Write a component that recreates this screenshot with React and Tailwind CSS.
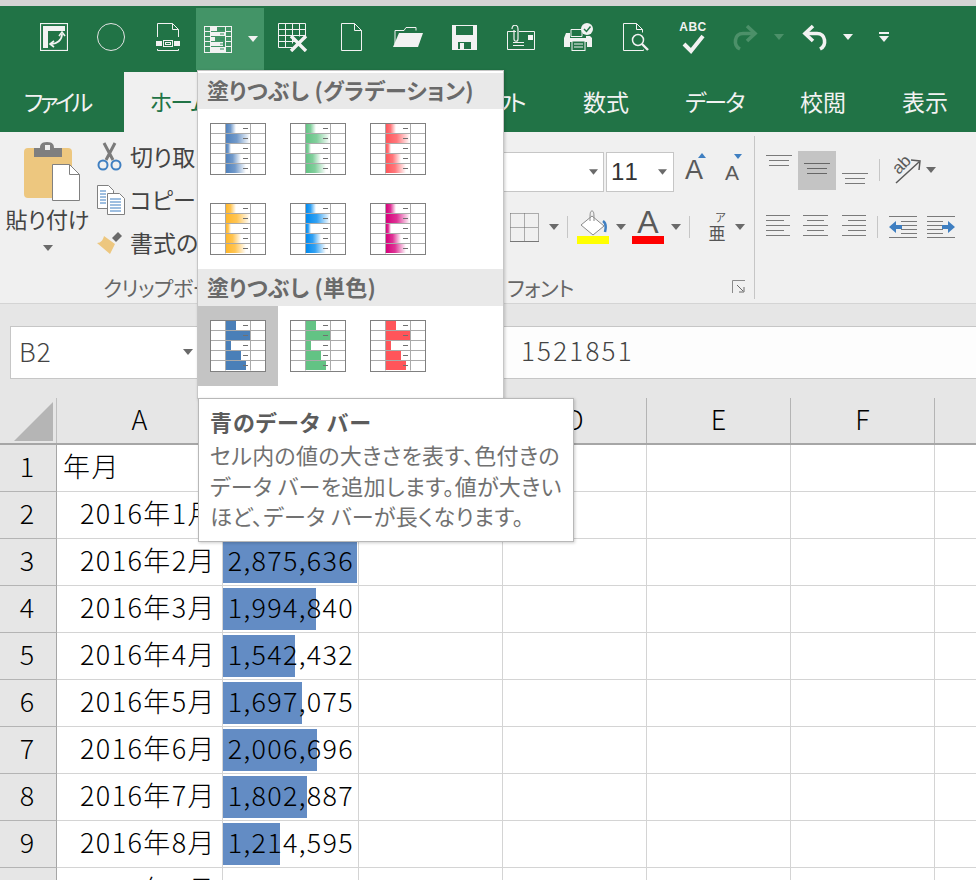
import React from 'react'

const rows = [
  { label: '2016年1月', value: 1521851 },
  { label: '2016年2月', value: 2875636 },
  { label: '2016年3月', value: 1994840 },
  { label: '2016年4月', value: 1542432 },
  { label: '2016年5月', value: 1697075 },
  { label: '2016年6月', value: 2006696 },
  { label: '2016年7月', value: 1802887 },
  { label: '2016年8月', value: 1214595 },
]

const Caret = ({ className = 'fill-[#6a6a6a]', w = 10, h = 6 }) => (
  <svg width={w} height={h} viewBox="0 0 10 6" className={`shrink-0 ${className}`}>
    <path d="M0 0h10L5 6z" />
  </svg>
)

// quick access toolbar icons, all light strokes on green
const Ico = ({ w = 28, h = 28, children }) => (
  <svg width={w} height={h} viewBox={`0 0 ${w} ${h}`} fill="none" stroke="#f2f2f2" strokeWidth="1">
    {children}
  </svg>
)

const PivotIcon = () => (
  <Ico>
    <rect x="0.5" y="0.5" width="27" height="27" strokeWidth="1.2" />
    <path d="M8 3h17v5H8zM3 3h5v22H3z" fill="#f2f2f2" stroke="none" />
    <path d="M11 21c6 0 11-4 11-10" strokeWidth="1.8" />
    <path d="M19 13l3-4 3 4M14 18l-4 3 4 3" strokeWidth="1.6" />
  </Ico>
)

const FormIcon = () => (
  <Ico w={24} h={28}>
    <path d="M1.500 14V.5h15l6 6V14M1.500 26v1.500h21V26M16.500.5v6h6" />
    <path d="M0 18h6v5H0zM18 18h6v5h-6z" fill="#f2f2f2" stroke="none" />
    <rect x="7.500" y="17.500" width="9" height="6" />
    <rect x="9.500" y="19.500" width="5" height="2" />
  </Ico>
)

const DataBarIcon = () => (
  <Ico h={27}>
    <rect x="0.5" y="0.5" width="27" height="26" />
    <path d="M6.500 0v27M21.500 0v27M0 5.500h6M0 10.500h6M0 15.500h6M0 20.500h6M21 5.500h7M21 10.500h7M21 15.500h7M21 20.500h7" />
    <path d="M7 1h6v4H7zM7 6h14v4H7zM7 11h4v4H7zM7 16h12v4H7zM7 21h14v5H7z" fill="#f2f2f2" stroke="none" />
    <path d="M16 3h4M16 8h4M16 13h4M16 18h4M16 23h4" stroke="#2f8a5a" />
  </Ico>
)

const GridXIcon = () => (
  <Ico w={31} h={29}>
    <path d="M.5.5h27v15M.5.5v24h14M.5 6.500h27M.5 12.500h27M.5 18.500h17M7.500.5v24M14.500.5v20M21.500.5v13" />
    <path d="M13 13l15 15M28 13L13 28" strokeWidth="3.400" />
  </Ico>
)

const NewDocIcon = () => (
  <Ico w={21} h={28}>
    <path d="M.5.5h13l7 7v20H.5zM13.500.5v7h7" />
  </Ico>
)

const FolderIcon = () => (
  <svg width="30" height="22" viewBox="0 0 30 22">
    <path d="M2 18V4.500h9l2-3h10v3" fill="none" stroke="#f2f2f2" />
    <path d="M0 21L6 7h24l-5 14z" fill="#f2f2f2" />
  </svg>
)

const SaveIcon = () => (
  <svg width="25" height="25" viewBox="0 0 25 25">
    <path d="M0 0h25v25H0z" fill="#f2f2f2" />
    <path d="M4 1h17v9H4zM6 17h13v7H6z" fill="#217346" />
    <path d="M8 18h4v6H8z" fill="#f2f2f2" />
  </svg>
)

const MailIcon = () => (
  <Ico h={25}>
    <path d="M9 6.500H.5v18h27v-18H12" />
    <path d="M6 20.500h11M6 17.500h11" />
    <path d="M21 10h5v5h-5z" fill="#f2f2f2" stroke="none" />
    <path d="M5 4c0-5 6-5 6 0v10c0 3-4 3-4 0V5" strokeWidth="1.200" />
  </Ico>
)

const PrinterIcon = () => (
  <svg width="29" height="28" viewBox="0 0 29 28">
    <path d="M7 6.500h11v7H7z" fill="none" stroke="#f2f2f2" />
    <path d="M2 10h4v5h16v-2h4l2 2v9h-5v-5H6v5H0v-9z" fill="#f2f2f2" />
    <rect x="8" y="18" width="13" height="9.500" fill="#217346" stroke="#f2f2f2" />
    <path d="M10 21h9M10 24h9" stroke="#f2f2f2" />
    <circle cx="23" cy="6" r="6" fill="#f2f2f2" />
    <path d="M20 6l2.500 2.500L26.500 3.500" fill="none" stroke="#217346" strokeWidth="1.500" />
  </svg>
)

const PreviewIcon = () => (
  <Ico h={28}>
    <path d="M.5.5h13l6 6v3M13.500.5v6h6M.5.5v27h20v-1" />
    <circle cx="15" cy="17" r="5.500" strokeWidth="1.500" />
    <path d="M19 21l6 6" strokeWidth="2.400" />
  </Ico>
)

const SpellIcon = () => (
  <div className="flex flex-col items-center">
    <span className="text-[12px] leading-[12px] font-bold text-[#f2f2f2] font-['Liberation_Sans',sans-serif] tracking-[0.5px]">ABC</span>
    <svg width="23" height="20" viewBox="0 0 23 20" className="mt-[1px]">
      <path d="M2 10l7 7L21 2" fill="none" stroke="#f2f2f2" strokeWidth="4" />
    </svg>
  </div>
)

const UndoIcon = ({ stroke = '#f2f2f2', flip = false }) => (
  <svg width="27" height="27" viewBox="0 0 27 27" className={flip ? '-scale-x-100' : ''} fill="none" stroke={stroke} strokeWidth="3.600">
    <path d="M11 2L3 9.500l8 7.500" />
    <path d="M4 9.500h11c9 0 10 12 3 15.500" />
  </svg>
)

const QatItem = ({ w = 57, children }) => (
  <div className="flex justify-center items-center shrink-0 h-[58px]" style={{ width: w }}>
    {children}
  </div>
)

const QuickAccess = () => (
  <div className="flex items-start pl-[25px] pt-[2px] h-[66px] bg-[#217346]">
    <QatItem><PivotIcon /></QatItem>
    <QatItem>
      <div className="w-[28px] h-[28px] rounded-full border border-[#e4e4e4]" />
    </QatItem>
    <QatItem><FormIcon /></QatItem>
    <div className="flex items-center w-[68px] h-[62px] bg-[#439467] pl-[8px] shrink-0">
      <DataBarIcon />
      <span className="ml-[16px]"><Caret className="fill-[#f2f2f2]" /></span>
    </div>
    <QatItem w={59}><GridXIcon /></QatItem>
    <QatItem w={56}><NewDocIcon /></QatItem>
    <QatItem w={58}><FolderIcon /></QatItem>
    <QatItem w={55}><SaveIcon /></QatItem>
    <QatItem w={58}><MailIcon /></QatItem>
    <QatItem w={57}><PrinterIcon /></QatItem>
    <QatItem w={59}><PreviewIcon /></QatItem>
    <QatItem w={54}><SpellIcon /></QatItem>
    <QatItem w={49}><UndoIcon stroke="#4c9069" flip /></QatItem>
    <div className="w-[20px] flex justify-center h-[58px] items-center"><Caret className="fill-[#4c9069]" /></div>
    <QatItem w={52}><UndoIcon /></QatItem>
    <div className="w-[14px] flex justify-center h-[58px] items-center"><Caret className="fill-[#f2f2f2]" /></div>
    <div className="ml-[23px] flex flex-col items-center gap-[2px] justify-center h-[58px] w-[12px]">
      <div className="w-[10px] h-[2px] bg-[#f2f2f2]" />
      <Caret className="fill-[#f2f2f2]" />
    </div>
  </div>
)

const Tabs = () => (
  <div className="flex h-[60px] bg-[#217346] text-[23px] text-[#f2f2f2] font-['Noto_Sans_CJK_JP',sans-serif] [font-feature-settings:'palt'] whitespace-nowrap">
    <div className="pl-[24px] w-[124px] shrink-0 flex items-center pb-[2px] tracking-[-3.5px]">ファイル</div>
    <div className="pl-[26px] w-[123px] shrink-0 bg-[#f0f0f0] text-[#217346] flex items-center pb-[2px] tracking-[-2px]">ホーム</div>
    <div className="pl-[28px] w-[102px] shrink-0 flex items-center pb-[2px]">挿入</div>
    <div className="pl-[28px] w-[206px] shrink-0 flex items-center pb-[2px] tracking-[-3px]">ページ レイアウト</div>
    <div className="px-[28px] shrink-0 flex items-center pb-[2px]">数式</div>
    <div className="pl-[28px] w-[115px] shrink-0 flex items-center pb-[2px] tracking-[-2px]">データ</div>
    <div className="px-[28px] shrink-0 flex items-center pb-[2px]">校閲</div>
    <div className="px-[28px] shrink-0 flex items-center pb-[2px]">表示</div>
  </div>
)

const ScissorsIcon = () => (
  <svg width="25" height="29" viewBox="0 0 25 29" fill="none">
    <path d="M7 1l9 17M18 1L9 18" stroke="#7a7a7a" strokeWidth="3" />
    <circle cx="6" cy="23" r="4.500" stroke="#3f7fc1" strokeWidth="2" />
    <circle cx="19" cy="23" r="4.500" stroke="#3f7fc1" strokeWidth="2" />
  </svg>
)

const CopyIcon = () => (
  <svg width="28" height="30" viewBox="0 0 28 30" fill="#fff" stroke="#808080">
    <path d="M.5.5h11l5 5v18H.5z" />
    <path d="M10.500 8.500h12l5 5v16h-17z" />
    <path d="M3 6h6M3 9h6M3 12h6M3 15h6M3 18h6M13 14h11M13 17h11M13 20h11M13 23h11M13 26h11" stroke="#3f7fc1" />
  </svg>
)

const BrushIcon = () => (
  <svg width="26" height="24" viewBox="0 0 26 24">
    <path d="M7 5l11 8-5 10L0 12c4 0 6-3 7-7z" fill="#edc77f" />
    <path d="M15 7l6-6 4 4-6 6z" fill="#6a6a6a" />
  </svg>
)

const PasteIcon = () => (
  <svg width="57" height="59" viewBox="0 0 57 59">
    <rect x="0" y="6" width="48" height="50" rx="4" fill="#edc77f" />
    <path d="M10 6h6c0-3 1-6 7-6s7 3 7 6h8v9H10z" fill="#7f7f7f" />
    <rect x="21" y="3" width="5" height="5" fill="#f0f0f0" />
    <path d="M28.500 22.500h17l10 10v26h-27z" fill="#fff" stroke="#808080" />
    <path d="M45.500 22.500v10h10" fill="none" stroke="#808080" />
  </svg>
)

const ClipItem = ({ icon, label, h }) => (
  <div className="flex items-center whitespace-nowrap" style={{ height: h }}>
    <div className="w-[33px] shrink-0">{icon}</div>
    <span>{label}</span>
  </div>
)

const GroupLabel = ({ className = '', children }) => (
  <div className={`h-[34px] pt-[3px] flex items-center text-[21px] text-[#666] whitespace-nowrap [font-feature-settings:'palt'] tracking-[-0.5px] ${className}`}>
    {children}
  </div>
)

const ClipboardGroup = () => (
  <div className="w-[268px] h-full shrink-0 flex flex-col overflow-hidden">
    <div className="flex h-[138px]">
      <div className="w-[97px] shrink-0 flex flex-col items-center pt-[10px] pr-[2px]">
        <div className="pl-[9px]"><PasteIcon /></div>
        <div className="text-[22px] leading-[30px] mt-[2px] text-[#444] whitespace-nowrap [font-feature-settings:'palt']">貼り付け</div>
        <div className="mt-[12px]"><Caret /></div>
      </div>
      <div className="pt-[3px] text-[23px] text-[#444] [font-feature-settings:'palt']">
        <ClipItem h={43} icon={<ScissorsIcon />} label="切り取り" />
        <ClipItem h={43} icon={<CopyIcon />} label="コピー" />
        <ClipItem h={43} icon={<BrushIcon />} label="書式のコピー/貼り付け" />
      </div>
    </div>
    <GroupLabel className="pl-[103px]">クリップボード</GroupLabel>
  </div>
)

const Sep = ({ h = 22, mx = 0 }) => (
  <div className="w-px bg-[#c6c6c6] shrink-0" style={{ height: h, marginLeft: mx, marginRight: mx }} />
)

// horizontal line stacks for the alignment buttons
const Lines = ({ items, w = 26, stroke = '#7a7a7a' }) => (
  <svg width={w} height={items.length * 5} viewBox={`0 0 ${w} ${items.length * 5}`} stroke={stroke} className="shrink-0">
    {items.map(([x1, x2], i) => (
      <path key={i} d={`M${x1} ${i * 5 + 0.5}H${x2}`} />
    ))}
  </svg>
)

const BorderIcon = () => (
  <svg width="29" height="29" viewBox="0 0 29 29" fill="none" stroke="#666" strokeDasharray="1 1">
    <path d="M.5.500h28M.5.500v28M14.500.500v28M28.500.500v28M.5 14.500h28" />
    <path d="M0 28.500h29" strokeDasharray="none" stroke="#777" />
  </svg>
)

const BucketIcon = () => (
  <div className="flex flex-col items-center w-[32px]">
    <svg width="28" height="26" viewBox="0 0 28 26" fill="none">
      <path d="M13 6L25 16 14 25 2 15z" fill="#fff" stroke="#8a8a8a" />
      <path d="M13 1c-2 0-2 3-2 10M13 1c2 0 2 3 2 10" stroke="#8a8a8a" />
      <path d="M24 11c3 2 3 7 2 11" stroke="#3f7fc1" strokeWidth="2.500" />
    </svg>
    <div className="w-[32px] h-[8px] bg-[#ffff00]" />
  </div>
)

const FontColorIcon = () => (
  <div className="flex flex-col items-center w-[32px]">
    <span className="text-[32px] leading-[24px] h-[26px] text-[#5a5a5a] font-['Liberation_Sans',sans-serif]">A</span>
    <div className="w-[32px] h-[8px] bg-[#ff0000]" />
  </div>
)

const IndentIcon = ({ flip }) => (
  <svg width="28" height="22" viewBox="0 0 28 22" className={flip ? '-scale-x-100' : ''}>
    <path d="M0 .5h28M0 21.500h28M12 5.500h16M12 9.500h16M12 13.500h16M12 17.500h16" stroke="#7a7a7a" />
    <path d="M0 11l7-6v4h6v4H7v4z" fill="#3f7fc1" />
  </svg>
)

const FontGroup = () => (
  <div className="w-[486px] h-full shrink-0 flex flex-col">
    <div className="h-[138px] pt-[20px]">
      <div className="flex items-center h-[40px]">
        <div className="ml-[32px] w-[304px] h-[40px] bg-white border border-[#c6c6c6] flex items-center justify-end pr-[5px]">
          <Caret w={9} />
        </div>
        <div className="ml-[2px] w-[68px] h-[40px] bg-white border border-[#c6c6c6] flex items-center justify-between pl-[4px] pr-[6px]">
          <span className="text-[24px] text-[#333] font-['Liberation_Sans',sans-serif] tracking-[2px]">11</span>
          <Caret w={9} />
        </div>
        <div className="relative ml-[11px] -mt-[5px] text-[27px] leading-[30px] text-[#5a5a5a] font-['Liberation_Sans',sans-serif]">
          A
          <svg width="8" height="5" viewBox="0 0 8 5" className="absolute -top-[2px] -right-[3px] fill-[#3f7fc1]"><path d="M0 5h8L4 0z" /></svg>
        </div>
        <div className="relative ml-[22px] mt-[2px] text-[21px] leading-[24px] text-[#5a5a5a] font-['Liberation_Sans',sans-serif]">
          A
          <svg width="8" height="5" viewBox="0 0 8 5" className="absolute -top-[7px] -right-[3px] fill-[#3f7fc1]"><path d="M0 0h8L4 5z" /></svg>
        </div>
      </div>
      <div className="flex items-center h-[34px] mt-[18px] ml-[242px]">
        <BorderIcon />
        <span className="ml-[10px]"><Caret /></span>
        <Sep mx={8} />
        <span className="ml-[1px]"><BucketIcon /></span>
        <span className="ml-[7px]"><Caret /></span>
        <span className="ml-[6px]"><FontColorIcon /></span>
        <span className="ml-[7px]"><Caret /></span>
        <Sep mx={8} />
        <div className="ml-[10px] w-[18px] flex flex-col items-center text-[#555] leading-none font-['Noto_Sans_CJK_JP',sans-serif]">
          <span className="text-[11px] leading-[11px] self-end">ア</span>
          <span className="text-[17px] leading-[20px]">亜</span>
        </div>
        <span className="ml-[9px]"><Caret /></span>
      </div>
    </div>
    <div className="flex items-center justify-between pr-[9px]">
      <GroupLabel className="pl-[239px]">フォント</GroupLabel>
      <svg width="13" height="13" viewBox="0 0 13 13" fill="none" stroke="#8a8a8a">
        <path d="M.5 13V.5H13" />
        <path d="M5 5l6 6M12 7v5H7" stroke="#6a6a6a" />
      </svg>
    </div>
  </div>
)

const OrientIcon = () => (
  <div className="relative w-[30px] h-[30px] ml-[11px] text-[#5a5a5a]">
    <span className="absolute left-[1px] top-[1px] -rotate-45 text-[17px] leading-[17px] font-['Liberation_Sans',sans-serif]">ab</span>
    <svg width="30" height="30" viewBox="0 0 30 30" fill="none" stroke="#5a5a5a" className="absolute inset-0">
      <path d="M5 28L28 7M20 5l9 1-1 9" strokeWidth="1.500" />
    </svg>
  </div>
)

const AlignGroup = () => (
  <div className="flex-1 h-full flex flex-col pl-[11px]">
    <div className="flex items-center h-[40px] mt-[18px]">
      <div className="self-start mt-[5px]"><Lines items={[[0, 26], [3, 23], [3, 23]]} /></div>
      <div className="ml-[6px] w-[38px] h-[39px] bg-[#c4c4c4] flex items-center justify-center">
        <Lines items={[[0, 26], [3, 23], [3, 23]]} stroke="#666" />
      </div>
      <div className="ml-[6px] self-end mb-[2px]"><Lines items={[[0, 26], [3, 23], [3, 23]]} /></div>
      <span className="ml-[11px]"><Sep /></span>
      <OrientIcon />
      <span className="ml-[5px]"><Caret /></span>
    </div>
    <div className="flex items-center h-[24px] mt-[25px]">
      <Lines items={[[0, 24], [0, 18], [0, 24], [0, 18], [0, 24]]} w={24} />
      <span className="ml-[13px]"><Lines items={[[0, 25], [4, 21], [0, 25], [4, 21], [0, 25]]} w={25} /></span>
      <span className="ml-[14px]"><Lines items={[[0, 24], [6, 24], [0, 24], [6, 24], [0, 24]]} w={24} /></span>
      <span className="ml-[11px]"><Sep /></span>
      <span className="ml-[11px]"><IndentIcon /></span>
      <span className="ml-[10px]"><IndentIcon flip /></span>
    </div>
  </div>
)

const Ribbon = () => (
  <div className="relative flex h-[172px] bg-[#f0f0f0] border-b border-[#d4d4d4] font-['Noto_Sans_CJK_JP',sans-serif] overflow-hidden">
    <ClipboardGroup />
    <FontGroup />
    <div className="w-px bg-[#c6c6c6] my-[4px] shrink-0" />
    <AlignGroup />
  </div>
)

const FormulaBar = () => (
  <div className="flex items-center h-[94px] bg-[#e6e6e6] pl-[10px] pt-[2px]">
    <div className="w-[200px] h-[53px] bg-white border border-[#c6c6c6] flex items-center justify-between pl-[8px] pr-[16px]">
      <span className="text-[26px] text-[#444] font-light pb-[3px] tracking-[1px] font-['Noto_Sans_CJK_JP',sans-serif]">B2</span>
      <Caret w={10} />
    </div>
    <div className="ml-[90px] flex-1 h-[53px] bg-[#fdfdfd] border-y border-[#c6c6c6] flex items-center pl-[221px]">
      <span className="text-[26px] text-[#444] font-light pb-[5px] tracking-[2.200px] font-['Noto_Sans_CJK_JP',sans-serif]">1521851</span>
    </div>
  </div>
)

const colWidths = ['w-[166px]', 'w-[136px]', 'w-[144px]', 'w-[144px]', 'w-[144px]', 'w-[144px]']

const Sheet = () => (
  <div className="text-[27px] font-light text-black font-['Noto_Sans_CJK_JP',sans-serif]">
    <div className="flex h-[47px] bg-[#e6e6e6] border-b-2 border-[#a6a6a6]">
      <div className="w-[57px] shrink-0 border-r border-[#c0c0c0] pl-[14px] pt-[4px]">
        <svg width="39" height="39" viewBox="0 0 39 39"><path d="M39 0v39H0z" fill="#b5b5b5" /></svg>
      </div>
      {['A', 'B', 'C', 'D', 'E', 'F'].map((c, i) => (
        <div key={c} className={`${colWidths[i]} shrink-0 border-r border-[#b4b4b4] flex items-center justify-center pb-[2px]`}>{c}</div>
      ))}
    </div>
    {Array.from({ length: 10 }).map((_, i) => {
      const row = rows[i - 1]
      return (
        <div key={i} className="flex h-[47px]">
          <div className="w-[57px] shrink-0 bg-[#e6e6e6] border-r border-b border-r-[#a6a6a6] border-b-[#b4b4b4] flex items-center justify-center pr-[2px] pb-[3px]">{i + 1}</div>
          <div className="w-[166px] shrink-0 border-r border-b border-[#d4d4d4] flex items-center justify-end pr-[6px] pb-[3px] whitespace-nowrap tracking-[1.400px]">
            {i === 0 && <span className="w-full pl-[6px]">年月</span>}
            {row && row.label}
            {i === 9 && '2016年9月'}
          </div>
          <div className="relative w-[136px] shrink-0 border-r border-b border-[#d4d4d4] flex items-center justify-end pr-[4px] tracking-[1.300px]">
            {row && (
              <>
                <div className="absolute left-0 top-[2px] bottom-[2px] bg-[#638cc4]" style={{ width: (row.value / 2875636) * 134 }} />
                <span className="relative pb-[3px]">{row.value.toLocaleString('en-US')}</span>
              </>
            )}
          </div>
          {colWidths.slice(2).map((w, n) => (
            <div key={n} className={`${w} shrink-0 border-r border-b border-[#d4d4d4]`} />
          ))}
          <div className="flex-1 border-b border-[#d4d4d4]" />
        </div>
      )
    })}
  </div>
)

const Thumb = ({ color, id, solid }) => {
  const bars = [10, 24, 5, 15, 20]
  return (
    <svg width="56" height="52" viewBox="0 0 56 52">
      <defs>
        <linearGradient id={id}>
          <stop offset="0" stopColor={color} />
          <stop offset="0.45" stopColor={color} stopOpacity="0.8" />
          <stop offset="1" stopColor={color} stopOpacity="0" />
        </linearGradient>
      </defs>
      <rect x="0" y="0" width="56" height="52" fill="#fff" />
      <path d="M0 11h55M0 21h55M0 31h55M0 41h55M15.500 1v50M40.500 1v50" stroke="#aaaaaa" fill="none" transform="translate(0 -.5)" />
      {bars.map((b, i) => (
        <rect key={i} x="16" y={i * 10 + 1} width={b} height="9" fill={solid ? color : `url(#${id})`} />
      ))}
      <rect x="0.5" y="0.5" width="55" height="51" fill="none" stroke="#808080" />
      <path d="M33 5h5M33 15h5M33 25h5M33 35h5M33 45h5" stroke="#707070" transform="translate(0 .5)" />
    </svg>
  )
}

const Tile = ({ active, ...props }) => (
  <div className={`w-[80px] h-[80px] flex items-start pl-[12px] pt-[14px] ${active ? 'bg-[#c4c4c4]' : ''}`}>
    <Thumb {...props} />
  </div>
)

const MenuTitle = ({ className, children }) => (
  <div className={`${className} bg-[#e9e9e9] pl-[9px] pb-[3px] flex items-center text-[22px] font-bold text-[#6a6a6a] [font-feature-settings:'palt'] tracking-[0.2px] whitespace-nowrap`}>
    {children}
  </div>
)

const DataBarMenu = () => (
  <div className="absolute left-[197px] top-[70px] w-[307px] h-[329px] bg-white border border-[#c6c6c6] shadow-[1px_1px_3px_rgba(0,0,0,0.2)] pt-[2px] font-['Noto_Sans_CJK_JP',sans-serif]">
    <MenuTitle className="h-[36px]">塗りつぶし (グラデーション)</MenuTitle>
    <div className="grid grid-cols-[repeat(3,80px)]">
      <Tile id="g1" color="#4f81bd" />
      <Tile id="g2" color="#63c384" />
      <Tile id="g3" color="#ff555a" />
      <Tile id="g4" color="#ffb628" />
      <Tile id="g5" color="#008aef" />
      <Tile id="g6" color="#d6007b" />
    </div>
    <MenuTitle className="h-[37px]">塗りつぶし (単色)</MenuTitle>
    <div className="grid grid-cols-[repeat(3,80px)]">
      <Tile id="s1" color="#4a7fb8" solid active />
      <Tile id="s2" color="#63c384" solid />
      <Tile id="s3" color="#ff555a" solid />
    </div>
  </div>
)

const Tip = () => (
  <div className="absolute left-[198px] top-[398px] w-[376px] h-[144px] bg-white border border-[#b8b8b8] shadow-[1px_1px_3px_rgba(0,0,0,0.2)] pl-[11px] pt-[7px] font-['Noto_Sans_CJK_JP',sans-serif] [font-feature-settings:'palt'] whitespace-nowrap">
    <div className="text-[22px] leading-[30px] font-bold tracking-[1px] text-[#5c5c5c]">青のデータ バー</div>
    <div className="mt-[3px] text-[22px] leading-[30.500px] tracking-[0.3px] text-[#717171]">
      <div>セル内の値の大きさを表す、色付きの</div>
      <div>データ バーを追加します。値が大きい</div>
      <div>ほど、データ バーが長くなります。</div>
    </div>
  </div>
)

export default function App() {
  return (
    <div className="relative w-[976px] h-[880px] overflow-hidden bg-white">
      <div className="h-[6px] bg-[#d4d4d4]" />
      <QuickAccess />
      <Tabs />
      <Ribbon />
      <FormulaBar />
      <Sheet />
      <DataBarMenu />
      <Tip />
    </div>
  )
}
